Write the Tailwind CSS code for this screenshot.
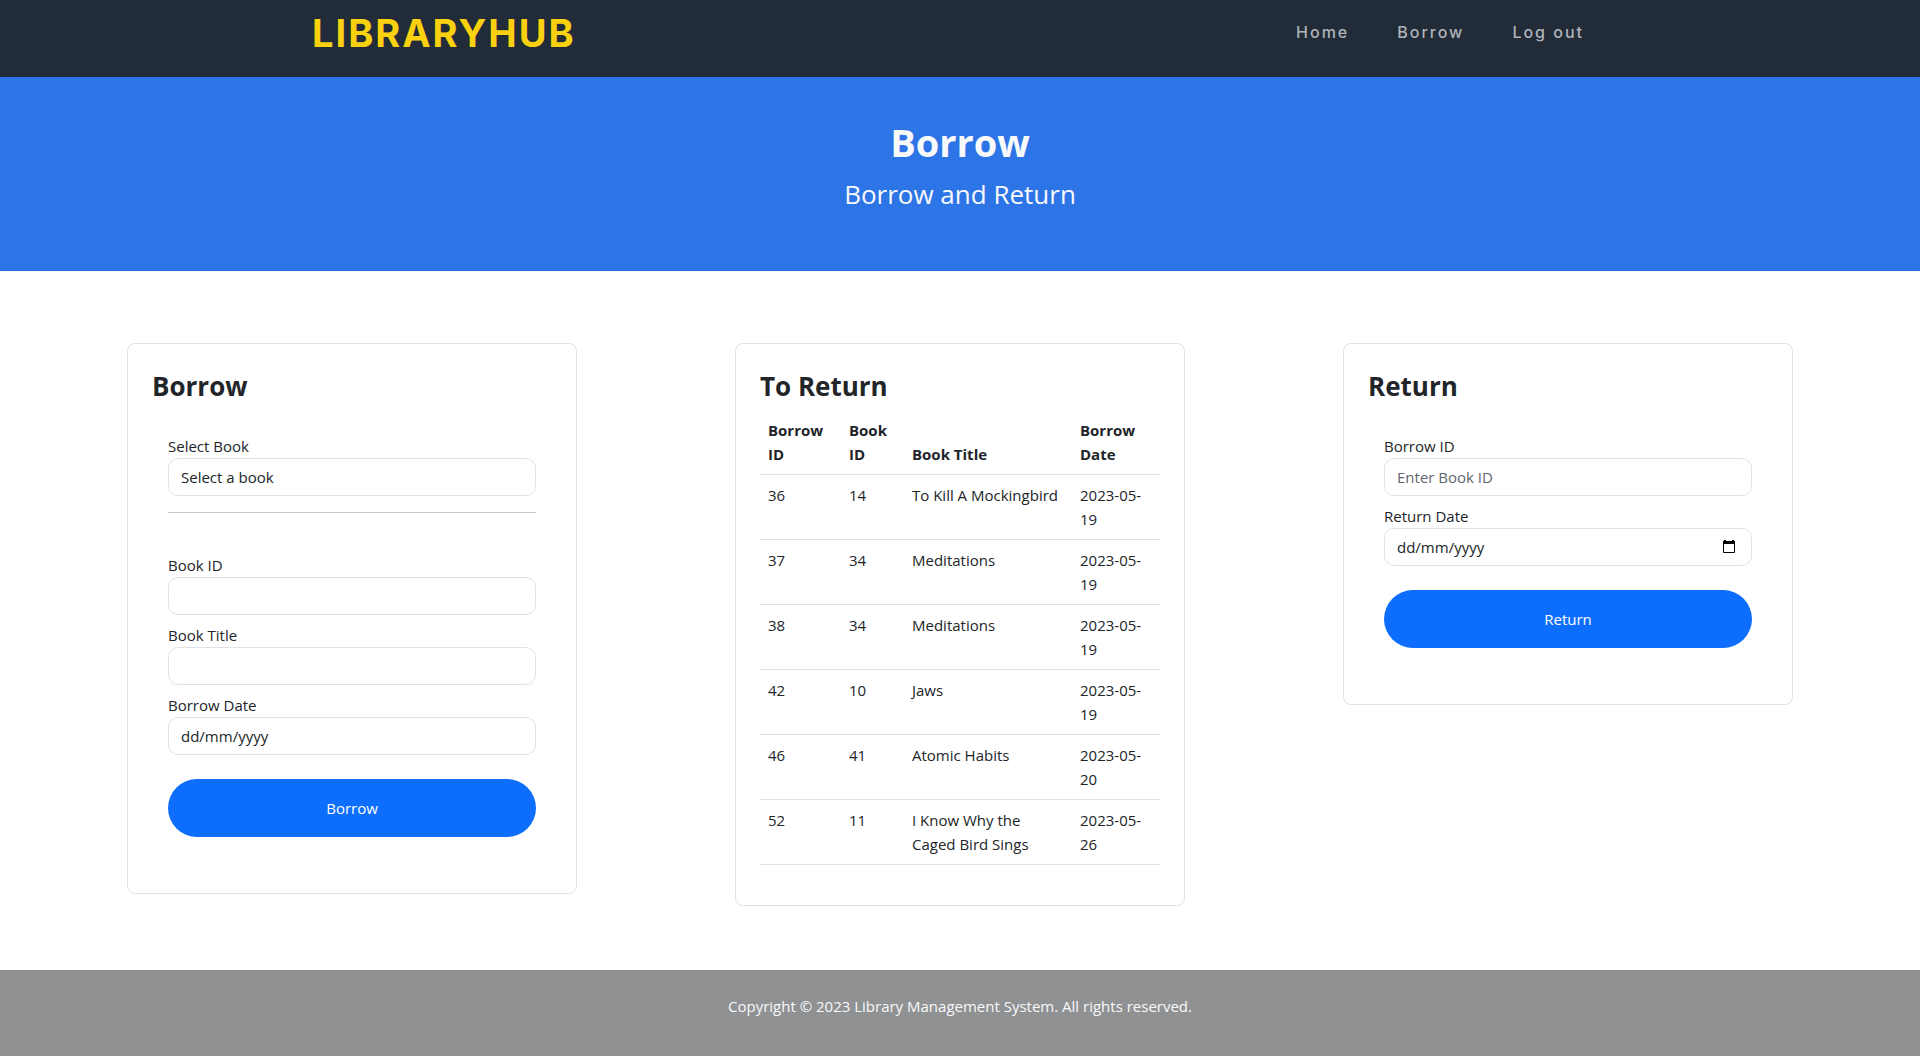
<!DOCTYPE html>
<html lang="en">
<head>
<meta charset="utf-8">
<meta name="viewport" content="width=device-width, initial-scale=1">
<title>LibraryHub - Borrow</title>
<script src="https://cdn.jsdelivr.net/npm/@tailwindcss/browser@4"></script>
</head>
<body class="bg-white font-['Open_Sans',sans-serif] text-[15px] leading-6 text-[#212529]">

<header class="bg-[#222b38]">
  <div class="mx-auto flex h-[77px] max-w-[1320px] items-start justify-between px-3 pt-1 font-['Inter',sans-serif]">
    <a href="#" class="text-[38px] leading-[58px] font-bold tracking-[2px] text-[#f9d10f]">LIBRARYHUB</a>
    <nav class="flex pt-4 text-base leading-6 font-medium tracking-[2px] text-[#b0b3b8]">
      <a href="#" class="px-6">Home</a>
      <a href="#" class="px-6">Borrow</a>
      <a href="#" class="px-6">Log out</a>
    </nav>
  </div>
</header>

<section class="bg-[#2d74e7] pt-10 pb-[50px] text-center text-[#f8f9fa]">
  <h1 class="text-[38px] leading-[50px] font-bold">Borrow</h1>
  <p class="text-[26px] leading-[54px]">Borrow and Return</p>
</section>

<main class="grid grid-cols-3 items-start justify-items-center px-12 pt-[72px] pb-16">
  <section class="w-full max-w-[450px] rounded-lg border border-[#dee2e6] p-6">
    <h2 class="mb-1.5 text-[26px] leading-[36px] font-bold">Borrow</h2>
    <form class="flex flex-col px-4 pt-6 pb-8">
      <label for="book">Select Book</label>
      <select id="book" class="h-[38px] appearance-none rounded-[10px] border border-[#dee2e6] bg-white px-3"><option>Select a book</option></select>
      <hr class="mt-4 mb-10 border-[#c8c9ca]">
      <label for="book-id">Book ID</label>
      <input id="book-id" type="text" class="mb-2 h-[38px] rounded-[10px] border border-[#dee2e6] px-3">
      <label for="book-title">Book Title</label>
      <input id="book-title" type="text" class="mb-2 h-[38px] rounded-[10px] border border-[#dee2e6] px-3">
      <label for="borrow-date">Borrow Date</label>
      <input id="borrow-date" type="text" placeholder="dd/mm/yyyy" class="mb-6 h-[38px] rounded-[10px] border border-[#dee2e6] px-3 placeholder:text-[#212529]">
      <button type="submit" class="h-[58px] rounded-full bg-[#0d6efd] text-white">Borrow</button>
    </form>
  </section>

  <section class="w-full max-w-[450px] rounded-lg border border-[#dee2e6] p-6">
    <h2 class="mb-1.5 text-[26px] leading-[36px] font-bold">To Return</h2>
    <table class="mb-4 w-full table-fixed border-collapse text-left [&_td]:p-2 [&_td]:align-top [&_th]:p-2 [&_th]:align-bottom [&_tr]:border-b [&_tr]:border-[#dee2e6]">
      <colgroup><col class="w-[81px]"><col class="w-[63px]"><col><col class="w-[88px]"></colgroup>
      <thead>
        <tr><th>Borrow ID</th><th>Book ID</th><th>Book Title</th><th>Borrow Date</th></tr>
      </thead>
      <tbody>
        <tr><td>36</td><td>14</td><td class="whitespace-nowrap">To Kill A Mockingbird</td><td>2023-05-19</td></tr>
        <tr><td>37</td><td>34</td><td>Meditations</td><td>2023-05-19</td></tr>
        <tr><td>38</td><td>34</td><td>Meditations</td><td>2023-05-19</td></tr>
        <tr><td>42</td><td>10</td><td>Jaws</td><td>2023-05-19</td></tr>
        <tr><td>46</td><td>41</td><td>Atomic Habits</td><td>2023-05-20</td></tr>
        <tr><td>52</td><td>11</td><td>I Know Why the Caged Bird Sings</td><td>2023-05-26</td></tr>
      </tbody>
    </table>
  </section>

  <section class="w-full max-w-[450px] rounded-lg border border-[#dee2e6] p-6">
    <h2 class="mb-1.5 text-[26px] leading-[36px] font-bold">Return</h2>
    <form class="flex flex-col px-4 pt-6 pb-8">
      <label for="borrow-id">Borrow ID</label>
      <input id="borrow-id" type="text" placeholder="Enter Book ID" class="mb-2 h-[38px] rounded-[10px] border border-[#dee2e6] px-3 placeholder:text-[#5f666c]">
      <label for="return-date">Return Date</label>
      <div class="mb-6 flex h-[38px] items-center rounded-[10px] border border-[#dee2e6] pr-3.5 pl-3">
        <input id="return-date" type="text" placeholder="dd/mm/yyyy" class="min-w-0 flex-1 placeholder:text-[#212529]">
        <button type="button" aria-label="Open calendar">
          <svg class="block size-4" viewBox="0 0 16 16" fill="none"><path d="M2.5 3.5h11v10h-11z" stroke="#000"/><path d="M2 2h12v3H2zM3 1h2v1H3zM11 1h2v1h-2z" fill="#000"/></svg>
        </button>
      </div>
      <button type="submit" class="h-[58px] rounded-full bg-[#0d6efd] text-white">Return</button>
    </form>
  </section>
</main>

<footer class="bg-[#909192] pt-6 pb-[38px] text-center text-[#f8f9fa]">
  <p>Copyright © 2023 Library Management System. All rights reserved.</p>
</footer>

</body>
</html>
